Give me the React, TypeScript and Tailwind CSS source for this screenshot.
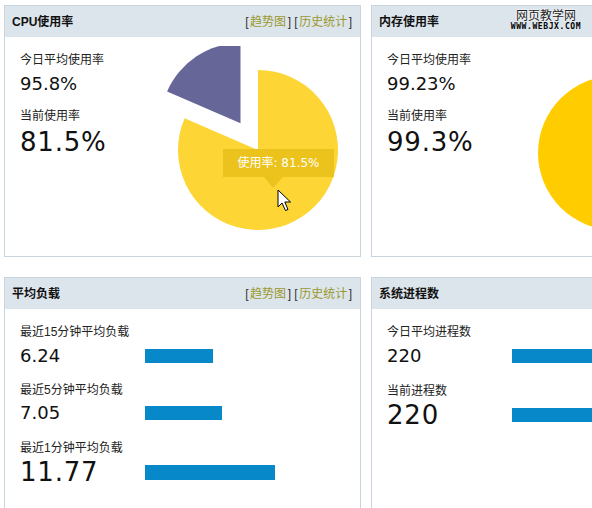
import React from 'react';

const cjk = "font-['Liberation_Sans','Noto_Sans_CJK_SC',sans-serif]";
const num = "font-['DejaVu_Sans','Noto_Sans_CJK_SC',sans-serif]";

function PanelHeader({ title, links = false }: { title: string; links?: boolean }) {
  return (
    <div className="h-[31px] bg-[#dde5ec] flex items-center justify-between pl-[7px] pr-[8px]">
      <span className={`${cjk} text-[12px] font-bold text-[#111]`}>{title}</span>
      {links && (
        <span className={`${cjk} text-[12px] text-[#333]`}>
          [<span className="text-[#99992e] mx-[1.5px]">趋势图</span>] [<span className="text-[#99992e] mx-[1.5px]">历史统计</span>]
        </span>
      )}
    </div>
  );
}

function Panel({ title, links, children }: { title: string; links?: boolean; children: React.ReactNode }) {
  return (
    <div className="h-[252px] border border-[#c8d4de] bg-white overflow-hidden flex flex-col">
      <PanelHeader title={title} links={links} />
      <div className="flex-1 flex pt-[15px] pl-[15px]">{children}</div>
    </div>
  );
}

function Label({ text, className = '' }: { text: string; className?: string }) {
  return <div className={`${cjk} text-[12px] leading-4 h-4 text-[#222] ${className}`}>{text}</div>;
}

function Value({ text, big = false, className = '' }: { text: string; big?: boolean; className?: string }) {
  return (
    <div className={`${num} text-[#111] ${big ? 'text-[26px] leading-[30px] tracking-[0.8px]' : 'text-[18px] leading-[22px]'} ${className}`}>
      {text}
    </div>
  );
}

function UsageText({ avg, cur }: { avg: string; cur: string }) {
  return (
    <div className="w-[140px] shrink-0 flex flex-col">
      <Label text="今日平均使用率" />
      <Value text={avg} className="mt-[5px]" />
      <Label text="当前使用率" className="mt-[13px]" />
      <Value text={cur} big className="mt-[3px]" />
    </div>
  );
}

function BarRow({ value, width, big = false, barH = 'h-[14px]', className = '' }: { value: string; width: number; big?: boolean; barH?: string; className?: string }) {
  return (
    <div className={`flex items-center ${className}`}>
      <div className="w-[125px] shrink-0">
        <Value text={value} big={big} />
      </div>
      <div className={`${barH} bg-[#0788c8] shrink-0`} style={{ width }} />
    </div>
  );
}

function CpuPie() {
  return (
    <svg width="190" height="200" className="-mt-[6px] shrink-0">
      <path d="M98,104 L98,24 A80,80 0 1 1 24.6,72.2 Z" fill="#fdd535" />
      <path d="M80.5,77.2 L7.1,45.4 A80,80 0 0 1 80.5,-2.8 Z" fill="#666699" />
      <rect x="63" y="103" width="111" height="28" fill="#ecc31c" />
      <polygon points="104,131 123,131 113,142" fill="#ecc31c" />
      <text
        x="118.5"
        y="121"
        textAnchor="middle"
        fill="#ffffff"
        fontSize="12"
        fontFamily="'DejaVu Sans','Noto Sans CJK SC',sans-serif"
      >
        使用率: 81.5%
      </text>
      <path
        d="M118,144 L118,161 L122,157 L125.5,164.5 L128,163.5 L124.8,156 L130.5,156 Z"
        fill="#ffffff"
        stroke="#000000"
        strokeWidth="1"
        strokeLinejoin="miter"
      />
    </svg>
  );
}

function MemPie() {
  return (
    <svg width="200" height="200" className="shrink-0">
      <circle cx="88" cy="101" r="77" fill="#ffcc00" />
    </svg>
  );
}

export default function App() {
  return (
    <div className="relative w-[592px] h-[508px] overflow-hidden bg-white">
      <div className="grid grid-cols-[357px_357px] grid-rows-[252px_252px] gap-x-[10px] gap-y-[20px] pl-[4px] pt-[5px]">
        <Panel title="CPU使用率" links>
          <UsageText avg="95.8%" cur="81.5%" />
          <CpuPie />
        </Panel>

        <Panel title="内存使用率">
          <UsageText avg="99.23%" cur="99.3%" />
          <MemPie />
        </Panel>

        <Panel title="平均负载" links>
          <div className="flex flex-col">
            <Label text="最近15分钟平均负载" />
            <BarRow value="6.24" width={68} className="mt-[5px]" />
            <Label text="最近5分钟平均负载" className="mt-[15px]" />
            <BarRow value="7.05" width={77} className="mt-[4px]" />
            <Label text="最近1分钟平均负载" className="mt-[16px]" />
            <BarRow value="11.77" width={130} big barH="h-[15px]" className="mt-[1px]" />
          </div>
        </Panel>

        <Panel title="系统进程数">
          <div className="flex flex-col">
            <Label text="今日平均进程数" />
            <BarRow value="220" width={150} className="mt-[5px]" />
            <Label text="当前进程数" className="mt-[16px]" />
            <BarRow value="220" width={150} big className="mt-[1px]" />
          </div>
        </Panel>
      </div>

      {/* watermark over the memory panel header */}
      <div className="absolute left-[510px] top-[8px] w-[72px] flex flex-col items-center">
        <span className="font-['Noto_Sans_CJK_SC',sans-serif] text-[12px] leading-[14px] text-[#222] [text-shadow:0_0_2px_#fff,0_0_2px_#fff]">
          网页教学网
        </span>
        <span className="font-['DejaVu_Sans_Mono',monospace] font-bold text-[8px] leading-[9px] tracking-[0.6px] text-black">
          WWW.WEBJX.COM
        </span>
      </div>
    </div>
  );
}
